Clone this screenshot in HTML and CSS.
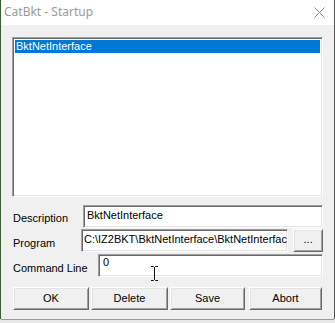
FILE: index.html
```html
<!DOCTYPE html>
<html>
<head>
<meta charset="utf-8">
<link rel="stylesheet" href="styles.css">
</head>
<body>
<div class="window">
  <div class="titlebar">
    <span class="title">CatBkt - Startup</span>
    <svg class="close" width="11" height="11" viewBox="0 0 11 11"><path d="M0.5 0.5 L10.5 10.5 M10.5 0.5 L0.5 10.5" stroke="#8a8a8a" stroke-width="1" fill="none"/></svg>
  </div>
  <div class="content">
    <div class="listbox">
      <div class="item selected">BktNetInterface</div>
    </div>
    <div class="row row-desc">
      <span class="label lbl-desc">Description</span>
      <div class="input in-desc">BktNetInterface</div>
    </div>
    <div class="row row-prog">
      <span class="label lbl-prog">Program</span>
      <div class="input in-prog"><span class="clip">C:\IZ2BKT\BktNetInterface\BktNetInterfac</span></div>
      <div class="btn btn-browse">...</div>
    </div>
    <div class="row row-cmd">
      <span class="label lbl-cmd">Command Line</span>
      <div class="input in-cmd top">0</div>
    </div>
    <div class="buttons">
      <div class="btn">OK</div>
      <div class="btn">Delete</div>
      <div class="btn">Save</div>
      <div class="btn">Abort</div>
    </div>
  </div>
  <svg class="ibeam" width="9" height="17" viewBox="0 0 9 17"><path d="M1 1.5 H3.5 L4.5 2.5 L5.5 1.5 H8 M4.5 2.5 V14.5 M1 15.5 H3.5 L4.5 14.5 L5.5 15.5 H8" stroke="#111" stroke-width="1" fill="none"/></svg>
</div>
</body>
</html>
```
FILE: styles.css
```css
html, body {
  margin: 0;
  padding: 0;
}
body {
  width: 335px;
  height: 323px;
  background: #e8e8e8;
  overflow: hidden;
  font-family: "Liberation Sans", Arial, sans-serif;
  font-size: 11px;
  color: #000;
}
.window {
  position: relative;
  width: 333px;
  height: 319px;
  margin-left: 1px;
  background: #f0f0f0;
  box-shadow: -1px 0 0 #3c5a36, 0 1px 0 #9a9a9a, 1px 0 0 #555;
}
.titlebar {
  height: 25px;
  background: #fff;
  display: flex;
  align-items: center;
  justify-content: space-between;
  padding: 0 9px 0 3px;
}
.title {
  font-family: "Noto Sans", "Open Sans", sans-serif;
  font-size: 12px;
  color: #9a9a9a;
  padding-bottom: 2px;
}
.close {
  display: block;
  margin-bottom: 1px;
}
.content {
  padding: 12px 11px 0 11px;
}
.listbox {
  height: 160px;
  background: #fff;
  border-top: 1px solid #a0a0a0;
  border-left: 1px solid #a0a0a0;
  border-right: 1px solid #fff;
  border-bottom: 1px solid #fff;
  box-shadow: inset 1px 1px 0 #696969, inset -1px -1px 0 #e3e3e3;
  padding: 2px 2px 0 2px;
  box-sizing: border-box;
}
.item {
  height: 13px;
  line-height: 13px;
  padding-left: 1px;
}
.selected {
  background: #0078d7;
  color: #fff;
}
.row {
  display: flex;
  align-items: center;
  height: 23px;
}
.label {
  flex: none;
  padding-left: 1px;
}
.row-desc { margin-top: 8px; }
.row-prog { margin-top: 1px; }
.row-cmd { margin-top: 2px; }
.lbl-desc { width: 70px; padding-top: 2px; }
.lbl-prog { width: 68px; padding-top: 4px; }
.lbl-cmd { width: 85px; padding-top: 5px; }
.input {
  box-sizing: border-box;
  height: 23px;
  background: #fff;
  border-top: 1px solid #a0a0a0;
  border-left: 1px solid #a0a0a0;
  border-right: 1px solid #fff;
  border-bottom: 1px solid #fff;
  box-shadow: inset 1px 1px 0 #696969, inset -1px -1px 0 #e3e3e3;
  padding: 0 3px;
  line-height: 19px;
  white-space: nowrap;
  overflow: hidden;
}
.in-desc { width: 241px; }
.in-prog { width: 209px; padding: 0 0 0 2px; }
.clip {
  display: block;
  width: 205px;
  overflow: hidden;
  white-space: nowrap;
}
.in-cmd { width: 226px; padding-left: 4px; line-height: 15px; }
.btn {
  box-sizing: border-box;
  height: 23px;
  background: #f0f0f0;
  border-top: 1px solid #fff;
  border-left: 1px solid #fff;
  border-right: 1px solid #696969;
  border-bottom: 1px solid #696969;
  box-shadow: inset 1px 1px 0 #e3e3e3, inset -1px -1px 0 #a0a0a0;
  display: flex;
  align-items: center;
  justify-content: center;
  padding-bottom: 1px;
}
.btn-browse {
  width: 30px;
  margin-left: 5px;
  padding-bottom: 3px;
}
.buttons {
  display: grid;
  grid-template-columns: 76px 77px 75px 75px;
  column-gap: 2px;
  margin-top: 10px;
  padding-left: 1px;
}
.buttons .btn:nth-child(4) { margin-left: 2px; }
.ibeam {
  position: absolute;
  left: 149px;
  top: 265px;
}
```
